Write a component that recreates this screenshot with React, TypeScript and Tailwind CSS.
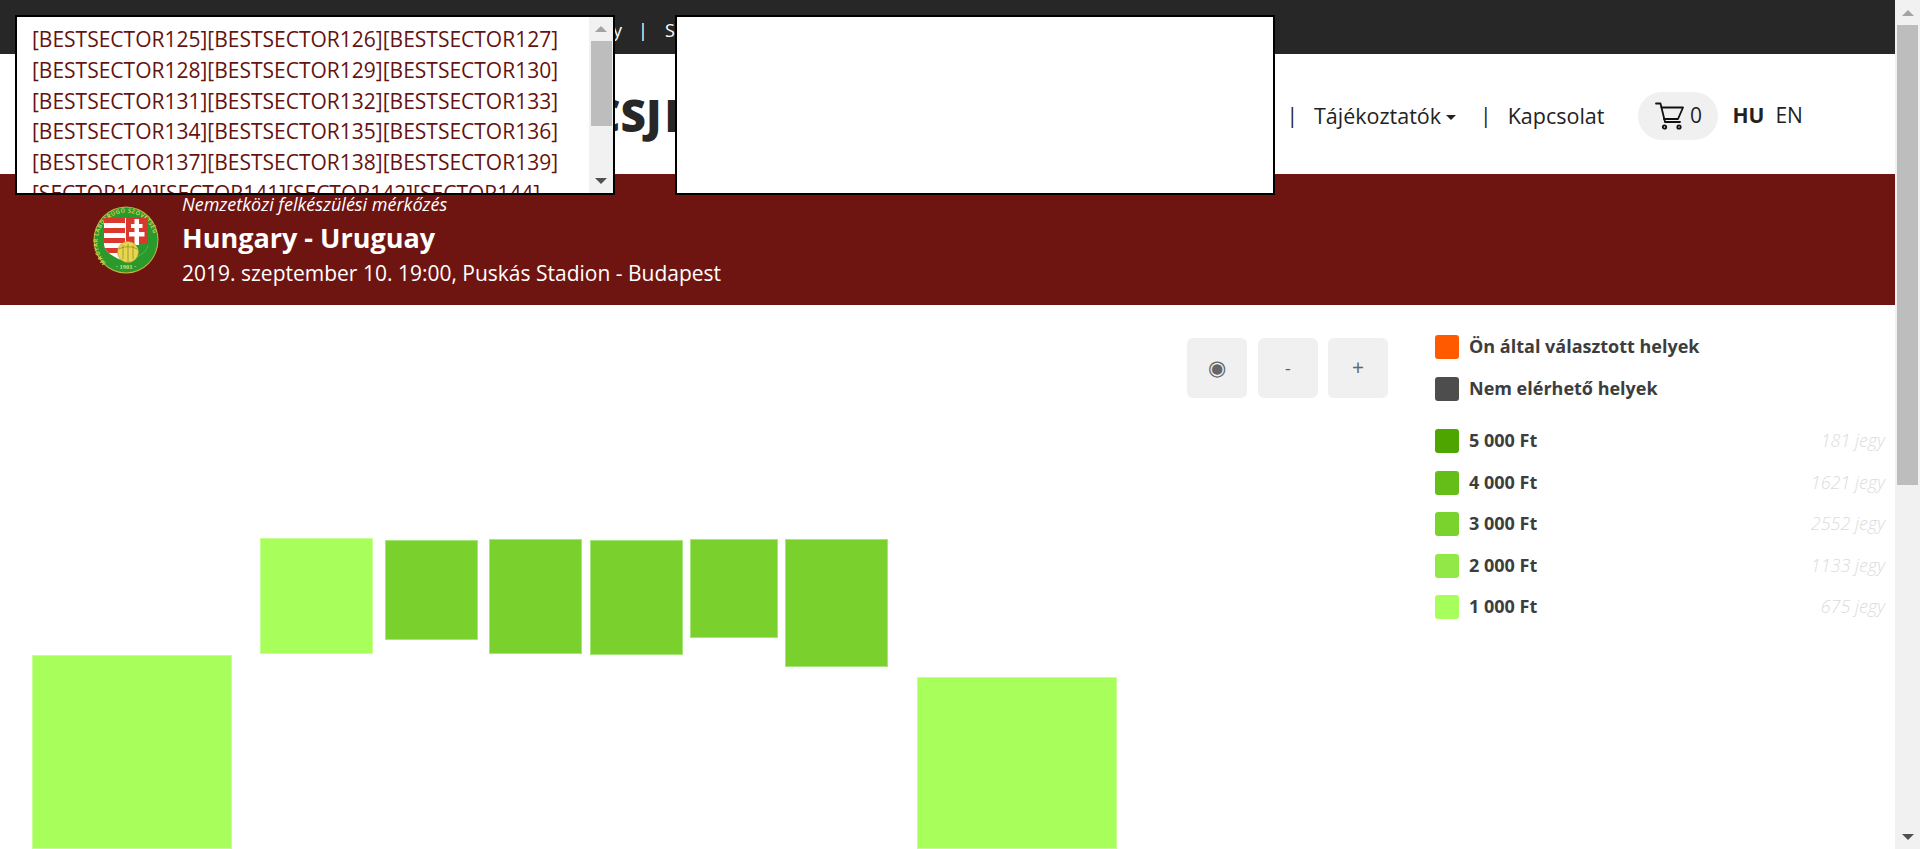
const F = "font-['Open_Sans',sans-serif]";

function Logo() {
  return (
    <svg width="66" height="68" viewBox="0 0 66 68" className="shrink-0">
      <defs>
        <path id="ring" d="M13 57A28.500 29.500 0 1 1 53 57" fill="none" />
        <clipPath id="shield"><path d="M11 12h44v26c0 9-12 14-22 18C23 52 11 47 11 38z" /></clipPath>
      </defs>
      <ellipse cx="33" cy="34" rx="32.500" ry="33.500" fill="#c9b53a" />
      <ellipse cx="33" cy="34" rx="31.500" ry="32.500" fill="#2a9a2c" />
      <text fontSize="5.600" fill="#e6d765" fontFamily="Open Sans, sans-serif" fontWeight="600" letterSpacing=".55">
        <textPath href="#ring">MAGYAR LABDARÚGÓ SZÖVETSÉG</textPath>
      </text>
      <text x="33" y="63" textAnchor="middle" fontSize="6.500" fill="#e6d765" fontFamily="Liberation Serif, serif" fontWeight="700">· 1901 ·</text>
      <g clipPath="url(#shield)">
        <rect x="9" y="10" width="48" height="50" fill="#fff" />
        <rect x="9" y="12" width="23" height="5" fill="#d8392c" />
        <rect x="9" y="22" width="23" height="5" fill="#d8392c" />
        <rect x="9" y="32" width="23" height="5" fill="#d8392c" />
        <rect x="9" y="42" width="23" height="5" fill="#d8392c" />
        <rect x="33" y="10" width="24" height="30" fill="#d8392c" />
        <rect x="33" y="38" width="24" height="20" fill="#2a9a2c" />
        <rect x="41.500" y="13" width="4.500" height="26" fill="#fff" />
        <rect x="38" y="18" width="11.500" height="4" fill="#fff" />
        <rect x="36" y="26" width="15.500" height="4.500" fill="#fff" />
      </g>
      <circle cx="35" cy="46" r="10.500" fill="#e9d64f" stroke="#a8962c" strokeWidth=".6" />
      <path d="M26 43c5-3 13-3 18 0M30 39v14M35 38v18M40 39v14" fill="none" stroke="#8f8127" strokeWidth=".7" />
    </svg>
  );
}

function Cart() {
  return (
    <svg width="30" height="30" viewBox="0 0 30 30" fill="none" stroke="#111" strokeWidth="1.800" strokeLinejoin="round" strokeLinecap="round">
      <path d="M1 2.500h4.500L10 21h15" />
      <path d="M6.500 6.500H28L23 18H9" />
      <circle cx="9.500" cy="26" r="1.700" />
      <circle cx="24" cy="26" r="1.700" />
    </svg>
  );
}

function Up({ c }: { c: string }) {
  return <div className={c} />;
}

function InnerScrollbar() {
  return (
    <div className="flex h-full w-[24px] shrink-0 flex-col items-center bg-[#f1f1f1]">
      <div className="flex h-[24px] w-full shrink-0 items-center justify-center">
        <Up c="h-0 w-0 border-x-[6px] border-b-[6px] border-x-transparent border-b-[#a3a3a3]" />
      </div>
      <div className="h-[85px] w-[21px] shrink-0 bg-[#bdbdbd]" />
      <div className="flex-1" />
      <div className="flex h-[24px] w-full shrink-0 items-center justify-center">
        <Up c="h-0 w-0 border-x-[6px] border-t-[6px] border-x-transparent border-t-[#505050]" />
      </div>
    </div>
  );
}

function PageScrollbar() {
  return (
    <div className="flex h-full w-[25px] shrink-0 flex-col items-center bg-[#f1f1f1]">
      <div className="flex h-[25px] w-full shrink-0 items-center justify-center">
        <Up c="h-0 w-0 border-x-[6px] border-b-[6px] border-x-transparent border-b-[#a3a3a3]" />
      </div>
      <div className="h-[460px] w-[21px] shrink-0 bg-[#bdbdbd]" />
      <div className="flex-1" />
      <div className="flex h-[25px] w-full shrink-0 items-center justify-center">
        <Up c="h-0 w-0 border-x-[6px] border-t-[6px] border-x-transparent border-t-[#505050]" />
      </div>
    </div>
  );
}

const sectors = [
  "[BESTSECTOR125][BESTSECTOR126][BESTSECTOR127]",
  "[BESTSECTOR128][BESTSECTOR129][BESTSECTOR130]",
  "[BESTSECTOR131][BESTSECTOR132][BESTSECTOR133]",
  "[BESTSECTOR134][BESTSECTOR135][BESTSECTOR136]",
  "[BESTSECTOR137][BESTSECTOR138][BESTSECTOR139]",
  "[SECTOR140][SECTOR141][SECTOR142][SECTOR144]",
];

const prices = [
  ["5 000 Ft", "181 jegy", "bg-[#4fa500]"],
  ["4 000 Ft", "1621 jegy", "bg-[#65bd18]"],
  ["3 000 Ft", "2552 jegy", "bg-[#7ad32d]"],
  ["2 000 Ft", "1133 jegy", "bg-[#92e846]"],
  ["1 000 Ft", "675 jegy", "bg-[#a8ff5c]"],
];

export default function App() {
  return (
    <div className={`${F} relative flex h-[849px] w-[1920px] overflow-hidden bg-white`}>
      <div className="flex min-w-0 flex-1 flex-col">
        <div className="flex h-[54px] shrink-0 items-center bg-[#272727] pl-[613px] pt-[7px] text-[18px] text-white">
          <span>y</span>
          <span className="ml-[16px]">|</span>
          <span className="ml-[17px]">S</span>
        </div>

        <div className="flex h-[120px] shrink-0 items-center bg-white pt-[4px] text-[#222]">
          <div className="mt-[-2px] w-[706px] shrink-0 whitespace-nowrap pl-[592px] text-[44px] font-extrabold leading-none text-[#272727]">
            CSJ<span className="ml-[3px]">E</span>
          </div>
          <div className="flex w-[592px] shrink-0 items-center justify-end text-[21px]">|</div>
          <div className="flex items-center text-[21px] font-medium">
            <span className="ml-[16px] text-[21.500px]">Tájékoztatók</span>
            <span className="ml-[5px] mt-[2px] h-0 w-0 border-x-[5.500px] border-t-[5.500px] border-x-transparent border-t-[#222]" />
            <span className="ml-[24px] font-normal">|</span>
            <span className="ml-[16px] text-[21.500px]">Kapcsolat</span>
            <div className="ml-[34px] flex h-[48px] w-[80px] shrink-0 items-center justify-center gap-[5px] rounded-full bg-[#f0f0f0]">
              <Cart />
              <span>0</span>
            </div>
            <span className="ml-[14px] font-bold">HU</span>
            <span className="ml-[11px] font-normal">EN</span>
          </div>
        </div>

        <div className="flex h-[131px] shrink-0 items-center bg-[#6f1511] pl-[93px] text-white">
          <Logo />
          <div className="ml-[23px] flex flex-col">
            <span className="text-[18px] italic leading-[24px]">Nemzetközi felkészülési mérkőzés</span>
            <span className="mt-[5px] text-[27px] font-bold leading-[34px]">Hungary - Uruguay</span>
            <span className="mt-[4px] text-[21px] leading-[28px]">2019. szeptember 10. 19:00, Puskás Stadion - Budapest</span>
          </div>
        </div>

        <div className="flex min-h-0 flex-1">
          <div className="relative min-w-0 flex-1">
            <div className="flex justify-end gap-[10px] pr-[47px] pt-[33px] text-[#666]">
              <div className="mr-[1px] flex h-[60px] w-[60px] items-center justify-center rounded-md bg-[#f0f0f0] text-[21px]">◉</div>
              <div className="flex h-[60px] w-[60px] items-center justify-center rounded-md bg-[#f0f0f0] text-[18px]">-</div>
              <div className="flex h-[60px] w-[60px] items-center justify-center rounded-md bg-[#f0f0f0] text-[21px]">+</div>
            </div>
            <div className="absolute left-[32px] top-[350px] h-[194px] w-[200px] border border-[#c4ff90] bg-[#a8ff5c]" />
            <div className="absolute left-[260px] top-[233px] h-[116px] w-[113px] border border-[#c4ff90] bg-[#a8ff5c]" />
            <div className="absolute left-[385px] top-[235px] h-[100px] w-[93px] border border-[#a5e57a] bg-[#7ad12d]" />
            <div className="absolute left-[489px] top-[234px] h-[115px] w-[93px] border border-[#a5e57a] bg-[#7ad12d]" />
            <div className="absolute left-[590px] top-[235px] h-[115px] w-[93px] border border-[#a5e57a] bg-[#7ad12d]" />
            <div className="absolute left-[690px] top-[234px] h-[99px] w-[88px] border border-[#a5e57a] bg-[#7ad12d]" />
            <div className="absolute left-[785px] top-[234px] h-[128px] w-[103px] border border-[#a5e57a] bg-[#7ad12d]" />
            <div className="absolute left-[917px] top-[372px] h-[172px] w-[200px] border border-[#c4ff90] bg-[#a8ff5c]" />
          </div>

          <div className="w-[460px] shrink-0 pr-[10px] pt-[30px] text-[18px] font-bold text-[#3d3d3d]">
            <div className="flex h-[42px] items-start gap-[10px]">
              <div className="h-[24px] w-[24px] rounded-[3px] bg-[#ff5a00]" />
              <span className="leading-[22px]">Ön által választott helyek</span>
            </div>
            <div className="flex h-[52px] items-start gap-[10px]">
              <div className="h-[24px] w-[24px] rounded-[3px] bg-[#4d4d4d]" />
              <span className="leading-[22px]">Nem elérhető helyek</span>
            </div>
            {prices.map(([p, n, c]) => (
              <div key={p} className="flex h-[41.500px] items-start gap-[10px]">
                <div className={`h-[24px] w-[24px] rounded-[3px] ${c}`} />
                <span className="flex-1 leading-[22px]">{p}</span>
                <span className="font-light italic leading-[22px] text-[#dcdcdc]">{n}</span>
              </div>
            ))}
          </div>
        </div>
      </div>

      <PageScrollbar />

      <div className="absolute left-[15px] top-[15px] flex h-[180px] w-[600px] border-2 border-black bg-white">
        <div className="min-w-0 flex-1 overflow-hidden pl-[15px] pt-[7px] text-[21px] leading-[30.800px] text-[#651310]">
          {sectors.map((s) => (
            <div key={s} className="whitespace-nowrap">{s}</div>
          ))}
        </div>
        <InnerScrollbar />
      </div>

      <div className="absolute left-[675px] top-[15px] h-[180px] w-[600px] border-2 border-black bg-white" />
    </div>
  );
}
